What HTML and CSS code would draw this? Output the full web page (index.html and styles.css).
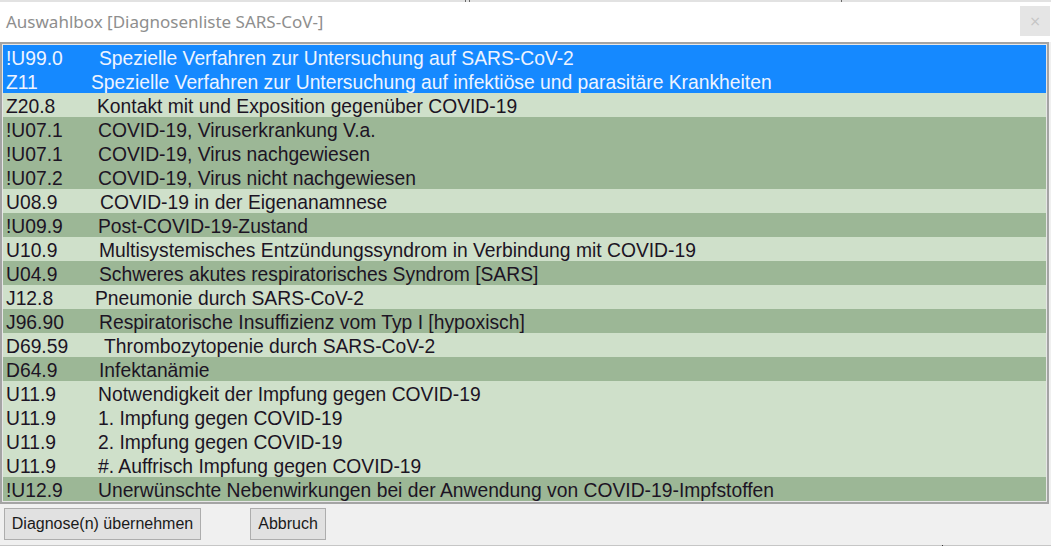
FILE: index.html
```html
<!DOCTYPE html>
<html lang="de">
<head>
<meta charset="utf-8">
<title>Auswahlbox</title>
<link rel="stylesheet" href="styles.css">
</head>
<body>
<div class="window">
  <div class="topstrip">
    <span class="tick t1"></span><span class="tick t2"></span><span class="tick t3"></span>
  </div>
  <div class="titlebar">
    <span class="title">Auswahlbox [Diagnosenliste SARS-CoV-]</span>
    <button class="close" type="button">&#215;</button>
  </div>
  <div class="listbox">
    <ul class="list">
      <li class="row sel"><span class="code c93">!U99.0</span><span class="desc">Spezielle Verfahren zur Untersuchung auf SARS-CoV-2</span></li>
      <li class="row sel"><span class="code c85">Z11</span><span class="desc">Spezielle Verfahren zur Untersuchung auf infektiöse und parasitäre Krankheiten</span></li>
      <li class="row light"><span class="code c91">Z20.8</span><span class="desc">Kontakt mit und Exposition gegenüber COVID-19</span></li>
      <li class="row dark"><span class="code c92">!U07.1</span><span class="desc">COVID-19, Viruserkrankung V.a.</span></li>
      <li class="row dark"><span class="code c92">!U07.1</span><span class="desc">COVID-19, Virus nachgewiesen</span></li>
      <li class="row dark"><span class="code c92">!U07.2</span><span class="desc">COVID-19, Virus nicht nachgewiesen</span></li>
      <li class="row light"><span class="code c94">U08.9</span><span class="desc">COVID-19 in der Eigenanamnese</span></li>
      <li class="row dark"><span class="code c92">!U09.9</span><span class="desc">Post-COVID-19-Zustand</span></li>
      <li class="row light"><span class="code c93">U10.9</span><span class="desc">Multisystemisches Entzündungssyndrom in Verbindung mit COVID-19</span></li>
      <li class="row dark"><span class="code c93">U04.9</span><span class="desc">Schweres akutes respiratorisches Syndrom [SARS]</span></li>
      <li class="row light"><span class="code c89">J12.8</span><span class="desc">Pneumonie durch SARS-CoV-2</span></li>
      <li class="row dark"><span class="code c93">J96.90</span><span class="desc">Respiratorische Insuffizienz vom Typ I [hypoxisch]</span></li>
      <li class="row light"><span class="code c98">D69.59</span><span class="desc">Thrombozytopenie durch SARS-CoV-2</span></li>
      <li class="row dark"><span class="code c93">D64.9</span><span class="desc">Infektanämie</span></li>
      <li class="row light"><span class="code c92">U11.9</span><span class="desc">Notwendigkeit der Impfung gegen COVID-19</span></li>
      <li class="row light"><span class="code c92">U11.9</span><span class="desc">1. Impfung gegen COVID-19</span></li>
      <li class="row light"><span class="code c92">U11.9</span><span class="desc">2. Impfung gegen COVID-19</span></li>
      <li class="row light"><span class="code c92">U11.9</span><span class="desc">#. Auffrisch Impfung gegen COVID-19</span></li>
      <li class="row dark"><span class="code c92">!U12.9</span><span class="desc">Unerwünschte Nebenwirkungen bei der Anwendung von COVID-19-Impfstoffen</span></li>
    </ul>
  </div>
  <div class="footer">
    <button class="btn btn-ok" type="button">Diagnose(n) übernehmen</button>
    <button class="btn btn-cancel" type="button">Abbruch</button>
  </div>
  <div class="bottomline"><span class="tick t4"></span></div>
</div>
</body>
</html>
```

FILE: styles.css
```css
* { box-sizing: border-box; }
html, body {
  margin: 0;
  padding: 0;
  width: 1051px;
  height: 546px;
  overflow: hidden;
  background: #f0f0f0;
}
.window {
  display: flex;
  flex-direction: column;
  width: 1051px;
  height: 546px;
}
.topstrip {
  position: relative;
  height: 2px;
  background: #e2e2e2;
  flex: none;
}
.tick {
  position: absolute;
  top: 0;
  width: 1px;
  height: 2px;
  background: #6a6a6a;
}
.t1 { left: 465px; }
.t2 { left: 469px; }
.t3 { left: 841px; }
.t4 { left: 942px; }
.titlebar {
  height: 40px;
  flex: none;
  background: #ffffff;
  display: flex;
  align-items: center;
  justify-content: space-between;
  padding-left: 6px;
  padding-right: 1px;
}
.title {
  font-family: "Noto Sans", "Open Sans", sans-serif;
  font-size: 17px;
  color: #8e8e8e;
  margin-top: -1px;
}
.close {
  width: 30px;
  height: 30px;
  border: none;
  background: #e5e5e5;
  color: #c4c4c4;
  font-family: "DejaVu Sans", sans-serif;
  font-size: 14px;
  padding: 0;
  margin-top: -3px;
}
.listbox {
  height: 462px;
  width: 1049px;
  flex: none;
  border: 2px solid #a4a4a4;
  padding: 1px;
  background: #e6e6e6;
}
.list {
  list-style: none;
  margin: 0;
  padding: 0;
  height: 456px;
  overflow: hidden;
}
.row {
  height: 24px;
  line-height: 23px;
  padding: 2px 0 0 3px;
  font-family: "Liberation Sans", Arial, sans-serif;
  font-size: 19.3px;
  color: #1c1424;
  white-space: nowrap;
  display: flex;
}
.row.sel { background: #1589ff; color: #eef4ff; }
.row.light { background: #cfe0ca; }
.row.dark { background: #9cb796; }
.code { flex: none; }
.c85 { width: 85px; }
.c89 { width: 89px; }
.c91 { width: 91px; }
.c92 { width: 92px; }
.c93 { width: 93px; }
.c94 { width: 94px; }
.c98 { width: 98px; }
.footer {
  flex: 1;
  display: flex;
  align-items: flex-start;
  gap: 49px;
  padding: 4px 0 0 4px;
}
.btn {
  height: 32px;
  background: #e1e1e1;
  border: 1px solid #adadad;
  font-family: "Liberation Sans", Arial, sans-serif;
  font-size: 16px;
  color: #1a1a1a;
  padding: 0;
}
.btn-ok { width: 197px; }
.btn-cancel { width: 76px; }
.bottomline {
  position: relative;
  height: 1px;
  flex: none;
  background: #c6c6c6;
}
.bottomline .tick { height: 1px; background: #333; }
```
